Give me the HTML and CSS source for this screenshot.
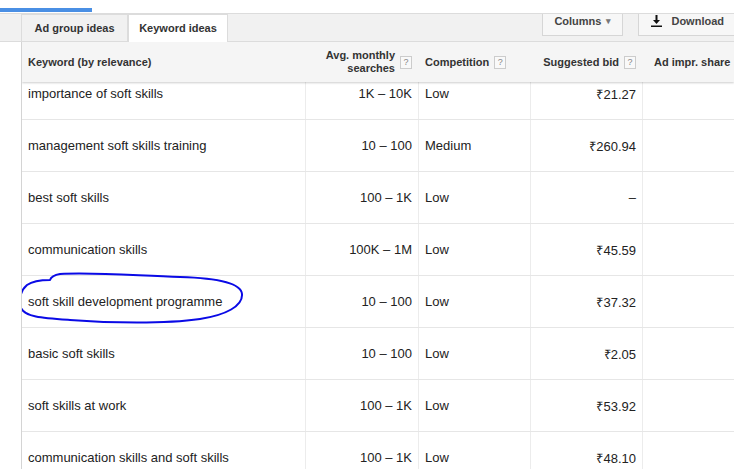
FILE: index.html
```html
<!DOCTYPE html>
<html>
<head>
  <title>Keyword ideas</title>
  <link rel="stylesheet" href="styles.css">
</head>
<body>
  <div class="progress"></div>
  <div class="toolbar">
    <div class="tab tab-first">Ad group ideas</div>
    <div class="tab tab-active">Keyword ideas</div>
    <div class="btn btn-columns">Columns <span class="caret">&#9662;</span></div>
    <div class="btn btn-download">
      <svg class="dl-icon" width="11" height="12" viewBox="0 0 11 12">
        <path d="M4.5 0h2v5h2.5l-3.5 4-3.5-4h2.5z" fill="#111"/>
        <rect x="0" y="10.5" width="11" height="1.5" fill="#111"/>
      </svg>
      Download
    </div>
  </div>

  <div class="grid">
    <div class="grid-head">
      <div class="hcell">Keyword (by relevance)</div>
      <div class="hcell right">Avg. monthly<br>searches <span class="help">?</span></div>
      <div class="hcell pad">Competition <span class="help">?</span></div>
      <div class="hcell right">Suggested bid <span class="help">?</span></div>
      <div class="hcell share">Ad impr. share</div>
    </div>

    <div class="rows">
      <div class="row">
        <div class="cell">importance of soft skills</div>
        <div class="cell right">1K – 10K</div>
        <div class="cell">Low</div>
        <div class="cell right">₹21.27</div>
        <div class="cell"></div>
      </div>
      <div class="row">
        <div class="cell">management soft skills training</div>
        <div class="cell right">10 – 100</div>
        <div class="cell">Medium</div>
        <div class="cell right">₹260.94</div>
        <div class="cell"></div>
      </div>
      <div class="row">
        <div class="cell">best soft skills</div>
        <div class="cell right">100 – 1K</div>
        <div class="cell">Low</div>
        <div class="cell right">–</div>
        <div class="cell"></div>
      </div>
      <div class="row">
        <div class="cell">communication skills</div>
        <div class="cell right">100K – 1M</div>
        <div class="cell">Low</div>
        <div class="cell right">₹45.59</div>
        <div class="cell"></div>
      </div>
      <div class="row">
        <div class="cell">soft skill development programme</div>
        <div class="cell right">10 – 100</div>
        <div class="cell">Low</div>
        <div class="cell right">₹37.32</div>
        <div class="cell"></div>
        <svg class="scribble" width="232" height="58" viewBox="16 270 232 58">
          <path d="M50 280 C51 277 54 275 60 274 C95 272 140 276 180 277 C215 278 241 283 242 294 C243 306 226 315 200 319 C165 324 110 323 70 320 C42 318 25 317 21 308 C19 299 20 291 27 285 C34 280 44 280 50 280"
                fill="none" stroke="#0a0ae6" stroke-width="2" stroke-linecap="round"/>
        </svg>
      </div>
      <div class="row">
        <div class="cell">basic soft skills</div>
        <div class="cell right">10 – 100</div>
        <div class="cell">Low</div>
        <div class="cell right">₹2.05</div>
        <div class="cell"></div>
      </div>
      <div class="row">
        <div class="cell">soft skills at work</div>
        <div class="cell right">100 – 1K</div>
        <div class="cell">Low</div>
        <div class="cell right">₹53.92</div>
        <div class="cell"></div>
      </div>
      <div class="row">
        <div class="cell">communication skills and soft skills</div>
        <div class="cell right">100 – 1K</div>
        <div class="cell">Low</div>
        <div class="cell right">₹48.10</div>
        <div class="cell"></div>
      </div>
    </div>
  </div>
</body>
</html>
```

FILE: styles.css
```css
body {
  margin: 0;
  width: 734px;
  height: 469px;
  overflow: hidden;
  background: #fff;
  color: #222;
  font-family: "Liberation Sans", Arial, sans-serif;
}

.progress {
  margin-top: 8px;
  margin-bottom: 1px;
  width: 92px;
  height: 4px;
  background: #4a8fe4;
}

.toolbar {
  display: flex;
  height: 27px;
  background: #f1f1f1;
  border-top: 1px solid #dcdcdc;
  border-bottom: 1px solid #dcdcdc;
}

.tab {
  height: 27px;
  line-height: 27px;
  font-size: 11px;
  font-weight: bold;
  color: #333;
  text-align: center;
  border: 1px solid #dcdcdc;
  border-bottom: none;
  box-sizing: border-box;
}

.tab-first {
  margin-left: 21px;
  width: 107px;
}

.tab-active {
  width: 100px;
  height: 28px;
  background: #fff;
  position: relative;
  z-index: 2;
}

.btn {
  display: flex;
  align-items: flex-start;
  height: 21px;
  padding: 0 11px;
  line-height: 15px;
  font-size: 11px;
  font-weight: bold;
  color: #444;
  background: #f7f7f7;
  border: 1px solid #d6d6d6;
  border-top: none;
}

.btn-columns {
  margin-left: auto;
}

.caret {
  margin-left: 5px;
  color: #777;
  font-size: 9px;
}

.btn-download {
  margin-left: 15px;
  margin-right: -3px;
  padding: 0 12px;
}

.dl-icon {
  margin-top: 1px;
  margin-right: 9px;
}

.grid {
  margin-left: 21px;
  border-left: 1px solid #d4d4d4;
  height: 427px;
  overflow: hidden;
}

.grid-head {
  display: grid;
  grid-template-columns: 283px 113px 112px 112px 1fr;
  height: 40px;
  background: #f5f5f5;
  box-shadow: 0 1px 2px rgba(0, 0, 0, 0.2);
  position: relative;
  z-index: 1;
}

.hcell {
  display: flex;
  align-items: center;
  padding: 0 6px;
  font-size: 11px;
  font-weight: bold;
  line-height: 13px;
  color: #333;
  white-space: nowrap;
}

.hcell.right {
  justify-content: flex-end;
  text-align: right;
}

.hcell.pad {
  padding-left: 7px;
}

.hcell.share {
  padding-left: 12px;
}

.help {
  display: inline-block;
  width: 10px;
  height: 11px;
  margin-left: 5px;
  border: 1px solid #ccc;
  background: #f9f9f9;
  color: #888;
  font-size: 9px;
  font-weight: normal;
  line-height: 11px;
  text-align: center;
  vertical-align: middle;
}

.rows {
  margin-top: -14px;
}

.row {
  display: grid;
  grid-template-columns: 283px 113px 112px 112px 1fr;
  height: 51px;
  border-bottom: 1px solid #e6e6e6;
  font-size: 13px;
  position: relative;
}

.cell {
  display: flex;
  align-items: center;
  padding: 0 6px;
  white-space: nowrap;
}

.cell + .cell {
  border-left: 1px solid #ececec;
}

.cell.right {
  justify-content: flex-end;
}

.scribble {
  position: absolute;
  left: -6px;
  top: -6px;
  overflow: visible;
  pointer-events: none;
}
```
